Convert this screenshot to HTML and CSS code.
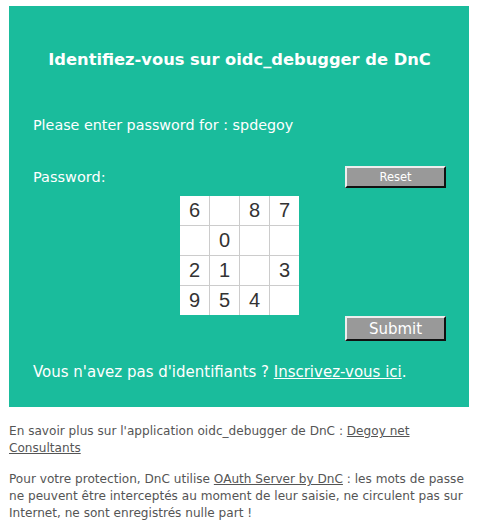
FILE: index.html
```html
<!DOCTYPE html>
<html lang="fr">
<head>
<meta charset="utf-8">
<title>Identifiez-vous</title>
<link rel="stylesheet" href="styles.css">
</head>
<body>
<div class="card">
  <h1 class="title">Identifiez-vous sur oidc_debugger de DnC</h1>
  <p class="prompt">Please enter password for : spdegoy</p>
  <div class="pw-row">
    <span class="pw-label">Password:</span>
    <button class="btn btn-reset" type="button">Reset</button>
  </div>
  <table class="pad">
    <tr><td>6</td><td></td><td>8</td><td>7</td></tr>
    <tr><td></td><td>0</td><td></td><td></td></tr>
    <tr><td>2</td><td>1</td><td></td><td>3</td></tr>
    <tr><td>9</td><td>5</td><td>4</td><td></td></tr>
  </table>
  <div class="submit-row">
    <button class="btn btn-submit" type="submit">Submit</button>
  </div>
  <p class="signup">Vous n'avez pas d'identifiants ? <a href="#">Inscrivez-vous ici</a>.</p>
</div>
<div class="footer">
  <p>En savoir plus sur l'application oidc_debugger de DnC : <a href="#">Degoy net Consultants</a></p>
  <p>Pour votre protection, DnC utilise <a href="#">OAuth Server by DnC</a> : les mots de passe ne peuvent être interceptés au moment de leur saisie, ne circulent pas sur Internet, ne sont enregistrés nulle part !</p>
</div>
</body>
</html>
```
FILE: styles.css
```css
html, body {
  margin: 0;
  padding: 0;
  background: #fff;
}
body {
  font-family: "DejaVu Sans", sans-serif;
}
.card {
  margin: 6px 9px 0;
  background: #1abc9c;
  color: #fff;
  padding: 44px 23px 0 24px;
  height: 357px;
}
.title {
  margin: 0;
  font-size: 16.3px;
  font-weight: bold;
  text-align: center;
  line-height: 20px;
}
.prompt {
  margin: 46px 0 0;
  font-size: 14.3px;
  line-height: 18px;
}
.pw-row {
  margin-top: 32px;
  display: flex;
  justify-content: space-between;
  align-items: center;
  height: 22px;
}
.pw-label {
  font-size: 14.5px;
}
.btn {
  background: #999;
  color: #fff;
  border: 2px outset #ddd;
  border-color: #eee #666 #666 #eee;
  width: 101px;
  padding: 0;
  font-family: "DejaVu Sans", sans-serif;
}
.btn-reset {
  height: 22px;
  font-size: 11.5px;
}
.btn-submit {
  height: 25px;
  font-size: 15px;
}
.pad {
  margin: 8px auto 0;
  border-collapse: collapse;
  background: #fff;
}
.pad td {
  width: 29px;
  height: 29px;
  padding: 0;
  border: 1px solid #ccc;
  text-align: center;
  font-family: "Liberation Sans", Arial, sans-serif;
  font-size: 20px;
  color: #333;
}
.pad tr:first-child td { border-top: none; }
.pad tr:last-child td { border-bottom: none; }
.pad td:first-child { border-left: none; }
.pad td:last-child { border-right: none; }
.submit-row {
  display: flex;
  justify-content: flex-end;
  margin-top: 1px;
}
.signup {
  margin: 22px 0 0;
  font-size: 15px;
  line-height: 18px;
}
.signup a {
  color: #fff;
}
.footer {
  padding: 2px 3px 0 9px;
  color: #555;
  font-size: 12.1px;
  line-height: 17px;
}
.footer p {
  margin: 14px 0 0;
}
.footer a {
  color: #555;
}
```
